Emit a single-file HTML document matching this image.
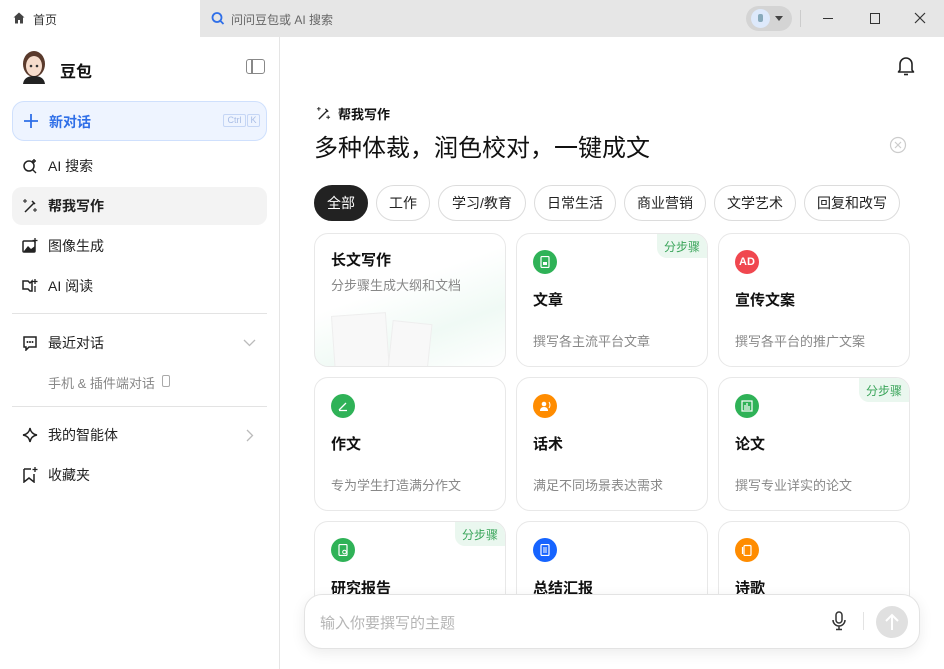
<!DOCTYPE html>
<html><head><meta charset="utf-8">
<style>
*{box-sizing:border-box;margin:0;padding:0}
body{width:944px;height:669px;overflow:hidden;background:#fff;font-family:"Liberation Sans","Noto Sans CJK SC",sans-serif;color:#222;position:relative}
.a{position:absolute}
.tabbar{left:0;top:0;width:944px;height:37px;background:#e6e6e6}
.side{left:0;top:37px;width:280px;height:632px;border-right:1px solid #e5e5e5;background:#fff}
.item{position:absolute;left:12px;width:255px;height:38px;border-radius:10px;font-size:14px;display:flex;align-items:center;padding-left:36px;color:#222}
.item svg{position:absolute;left:10px;top:11px}
.chip{position:absolute;top:185px;height:36px;border:1px solid #dcdcdc;border-radius:18px;font-size:14px;display:flex;align-items:center;justify-content:center;color:#222}
.card{position:absolute;width:192px;height:134px;border:1px solid #e8e8e8;border-radius:14px;background:#fff;overflow:hidden}
.card .ic{position:absolute;left:16px;top:16px;width:24px;height:24px;border-radius:50%}
.card .ic svg{position:absolute;left:6px;top:6px}
.card .t{position:absolute;left:16px;top:55px;font-size:15px;font-weight:bold;color:#111}
.card .d{position:absolute;left:16px;top:97px;font-size:13px;color:#888}
.badge{position:absolute;right:0;top:0;width:50px;height:24px;background:#eaf7ef;color:#3aa55a;font-size:12px;border-bottom-left-radius:10px;display:flex;align-items:center;justify-content:center}
</style></head><body>
<div class="a tabbar"></div>
<div class="a" style="left:0;top:0;width:200px;height:37px;background:#fff"></div>
<svg class="a" style="left:13px;top:12px" width="12" height="12" viewBox="0 0 12 12"><path d="M6 0.5L0.5 5.5H2V11.5H5V8H7V11.5H10V5.5H11.5Z" fill="#444"/></svg>
<div class="a" style="left:33px;top:11px;font-size:12px;color:#333">首页</div>
<svg class="a" style="left:211px;top:11px" width="14" height="14" viewBox="0 0 14 14"><circle cx="6" cy="6.5" r="4.5" fill="none" stroke="#2f6fe8" stroke-width="1.8"/><path d="M9.5 10L12.5 13" stroke="#2f6fe8" stroke-width="1.8"/></svg>
<div class="a" style="left:231px;top:11px;font-size:12px;color:#666">问问豆包或 AI 搜索</div>
<div class="a" style="left:746px;top:6px;width:46px;height:25px;border-radius:13px;background:#d4d4d4"></div>
<div class="a" style="left:751px;top:9px;width:19px;height:19px;border-radius:50%;background:#dde9fb"></div>
<div class="a" style="left:758px;top:14px;width:5px;height:8px;border-radius:2px;background:#8ab"></div>
<div class="a" style="left:775px;top:16px;width:0;height:0;border-left:4px solid transparent;border-right:4px solid transparent;border-top:5px solid #444"></div>
<div class="a" style="left:800px;top:10px;width:1px;height:17px;background:#ccc"></div>
<div class="a" style="left:823px;top:18px;width:10px;height:1px;background:#333"></div>
<div class="a" style="left:870px;top:13px;width:10px;height:11px;border:1.2px solid #333"></div>
<svg class="a" style="left:914px;top:12px" width="12" height="12"><path d="M1 1L11 11M11 1L1 11" stroke="#333" stroke-width="1.2"/></svg>

<div class="a side"></div>
<svg class="a" style="left:20px;top:50px" width="28" height="34" viewBox="0 0 28 34"><ellipse cx="14" cy="14" rx="11" ry="13" fill="#5a3a2c"/><ellipse cx="14" cy="16" rx="8" ry="10" fill="#f6dccc"/><path d="M3 34Q4 26 14 26Q24 26 25 34Z" fill="#222"/><circle cx="11" cy="16" r="1.3" fill="#333"/><circle cx="17" cy="16" r="1.3" fill="#333"/></svg>
<div class="a" style="left:60px;top:58px;font-size:16px;font-weight:bold;color:#111">豆包</div>
<div class="a" style="left:246px;top:59px;width:19px;height:15px;border:1.5px solid #888;border-radius:3px"></div>
<div class="a" style="left:251px;top:60px;width:1.5px;height:13px;background:#888"></div>

<div class="a" style="left:12px;top:101px;width:255px;height:40px;border-radius:12px;background:#eef4ff;border:1px solid #cfe0fd"></div>
<svg class="a" style="left:24px;top:114px" width="14" height="14"><path d="M7 0V14M0 7H14" stroke="#2f6fe8" stroke-width="1.8"/></svg>
<div class="a" style="left:49px;top:112px;font-size:14px;font-weight:bold;color:#2f6fe8">新对话</div>
<div class="a" style="left:223px;top:114px;width:23px;height:13px;border:1px solid #c5d6f5;border-radius:2px;font-size:9px;color:#a9bde6;text-align:center;line-height:11px">Ctrl</div>
<div class="a" style="left:247px;top:114px;width:13px;height:13px;border:1px solid #c5d6f5;border-radius:2px;font-size:9px;color:#a9bde6;text-align:center;line-height:11px">K</div>

<div class="item" style="top:147px"><svg width="16" height="16" viewBox="0 0 16 16"><circle cx="7" cy="8" r="5" fill="none" stroke="#222" stroke-width="1.5"/><path d="M10.5 11.5L14 15M12 1V5M10 3H14" stroke="#222" stroke-width="1.4"/></svg>AI 搜索</div>
<div class="item" style="top:187px;background:#f3f3f3;font-weight:bold"><svg width="16" height="16" viewBox="0 0 16 16"><path d="M3 14L12 5M10 3L13 6" stroke="#222" stroke-width="1.5"/><path d="M3 1V5M1 3H5M13 10V14M11 12H15" stroke="#222" stroke-width="1"/></svg>帮我写作</div>
<div class="item" style="top:227px"><svg width="16" height="16" viewBox="0 0 16 16"><rect x="1" y="3" width="12" height="11" rx="1" fill="none" stroke="#222" stroke-width="1.5"/><path d="M2 13L6 8L9 11L13 8V14H2Z" fill="#222"/><path d="M13 0V5M10.5 2.5H15.5" stroke="#222" stroke-width="1.3"/></svg>图像生成</div>
<div class="item" style="top:267px"><svg width="16" height="16" viewBox="0 0 16 16"><path d="M1 3H6L8 5L10 3V13H8L6 11H1Z" fill="none" stroke="#222" stroke-width="1.5"/><path d="M13 1V6M10.5 3.5H15.5M13 8V14" stroke="#222" stroke-width="1.3"/></svg>AI 阅读</div>
<div class="a" style="left:12px;top:313px;width:255px;height:1px;background:#e3e3e3"></div>
<div class="item" style="top:324px"><svg width="16" height="16" viewBox="0 0 16 16"><path d="M2 2H14V12H7L4 15V12H2Z" fill="none" stroke="#222" stroke-width="1.5"/><circle cx="5.5" cy="7" r="1" fill="#222"/><circle cx="8" cy="7" r="1" fill="#222"/><circle cx="10.5" cy="7" r="1" fill="#222"/></svg>最近对话</div>
<svg class="a" style="left:243px;top:339px" width="13" height="8"><path d="M1 1L6.5 6.5L12 1" stroke="#bbb" stroke-width="1.3" fill="none"/></svg>
<div class="a" style="left:48px;top:373px;font-size:13px;color:#888">手机 &amp; 插件端对话</div>
<div class="a" style="left:162px;top:375px;width:8px;height:12px;border:1.2px solid #aaa;border-radius:2px"></div>
<div class="a" style="left:12px;top:406px;width:255px;height:1px;background:#e3e3e3"></div>
<div class="item" style="top:416px"><svg width="16" height="16" viewBox="0 0 16 16"><path d="M8 1Q9 7 15 8Q9 9 8 15Q7 9 1 8Q7 7 8 1Z" fill="none" stroke="#222" stroke-width="1.4"/></svg>我的智能体</div>
<svg class="a" style="left:246px;top:429px" width="8" height="13"><path d="M1 1L6.5 6.5L1 12" stroke="#bbb" stroke-width="1.3" fill="none"/></svg>
<div class="item" style="top:456px"><svg width="16" height="16" viewBox="0 0 16 16"><path d="M2 2H9M12 7V15L7 11L2 15V2" fill="none" stroke="#222" stroke-width="1.5"/><path d="M13 0V5M10.5 2.5H15.5" stroke="#222" stroke-width="1.3"/></svg>收藏夹</div>

<svg class="a" style="left:896px;top:55px" width="20" height="22" viewBox="0 0 20 22"><path d="M4 15V9A6 6 0 0 1 16 9V15L17.5 17H2.5Z" fill="none" stroke="#222" stroke-width="1.6" stroke-linejoin="round"/><path d="M8 19.5H12" stroke="#222" stroke-width="1.6"/></svg>

<svg class="a" style="left:316px;top:106px" width="15" height="15" viewBox="0 0 16 16"><path d="M3 14L12 5M10 3L13 6" stroke="#222" stroke-width="1.5"/><path d="M3 1V5M1 3H5M13 10V14M11 12H15" stroke="#222" stroke-width="1"/></svg>
<div class="a" style="left:338px;top:104px;font-size:13px;font-weight:bold;color:#111">帮我写作</div>
<div class="a" style="left:314px;top:128px;font-size:24px;color:#111">多种体裁，润色校对，一键成文</div>
<svg class="a" style="left:889px;top:136px" width="18" height="18"><circle cx="9" cy="9" r="7.5" fill="none" stroke="#ccc" stroke-width="1.2"/><path d="M6 6L12 12M12 6L6 12" stroke="#ccc" stroke-width="1.2"/></svg>

<div class="chip" style="left:314px;width:54px;background:#222;border-color:#222;color:#fff">全部</div>
<div class="chip" style="left:376px;width:54px">工作</div>
<div class="chip" style="left:438px;width:88px">学习/教育</div>
<div class="chip" style="left:534px;width:82px">日常生活</div>
<div class="chip" style="left:624px;width:82px">商业营销</div>
<div class="chip" style="left:714px;width:82px">文学艺术</div>
<div class="chip" style="left:804px;width:96px">回复和改写</div>

<div class="card" style="left:314px;top:233px;background:linear-gradient(160deg,#fff 40%,#f0faf5 70%,#fff)">
<div class="t" style="top:15px">长文写作</div><div class="d" style="top:41px">分步骤生成大纲和文档</div>
<div class="a" style="left:18px;top:80px;width:55px;height:60px;background:#f8f8f8;border:1px solid #eee;transform:rotate(-4deg)"></div>
<div class="a" style="left:75px;top:88px;width:40px;height:50px;background:#f8f8f8;border:1px solid #eee;transform:rotate(6deg)"></div>
</div>
<div class="card" style="left:516px;top:233px"><div class="badge">分步骤</div><div class="ic" style="background:#2fb257"><svg width="12" height="12"><rect x="2" y="0.5" width="8" height="11" rx="1" fill="none" stroke="#fff" stroke-width="1.2"/><rect x="4" y="6" width="4" height="3" fill="#fff"/></svg></div><div class="t">文章</div><div class="d">撰写各主流平台文章</div></div>
<div class="card" style="left:718px;top:233px"><div class="ic" style="background:#f0474f;color:#fff;font-size:11px;font-weight:bold;text-align:center;line-height:24px">AD</div><div class="t">宣传文案</div><div class="d">撰写各平台的推广文案</div></div>

<div class="card" style="left:314px;top:377px"><div class="ic" style="background:#2fb257"><svg width="12" height="12"><path d="M2 10L9 3M2 10.5H10" stroke="#fff" stroke-width="1.3"/></svg></div><div class="t">作文</div><div class="d">专为学生打造满分作文</div></div>
<div class="card" style="left:516px;top:377px"><div class="ic" style="background:#ff8c00"><svg width="12" height="12"><circle cx="5" cy="4" r="2.3" fill="#fff"/><path d="M1 11Q1 7 5 7Q9 7 9 11Z" fill="#fff"/><path d="M10 2Q12 5 10 8" stroke="#fff" fill="none"/></svg></div><div class="t">话术</div><div class="d">满足不同场景表达需求</div></div>
<div class="card" style="left:718px;top:377px"><div class="badge">分步骤</div><div class="ic" style="background:#2fb257"><svg width="12" height="12"><rect x="1" y="1" width="10" height="10" fill="none" stroke="#fff" stroke-width="1.2"/><path d="M4 10V5M6 10V3M8 10V6" stroke="#fff" stroke-width="1.2"/></svg></div><div class="t">论文</div><div class="d">撰写专业详实的论文</div></div>

<div class="card" style="left:314px;top:521px;height:100px"><div class="badge">分步骤</div><div class="ic" style="background:#2fb257"><svg width="12" height="12"><rect x="2" y="0.5" width="8" height="11" rx="1" fill="none" stroke="#fff" stroke-width="1.2"/><circle cx="7.5" cy="8" r="1.8" fill="none" stroke="#fff"/></svg></div><div class="t">研究报告</div></div>
<div class="card" style="left:516px;top:521px;height:100px"><div class="ic" style="background:#1664ff"><svg width="12" height="12"><rect x="2" y="0.5" width="8" height="11" rx="1" fill="none" stroke="#fff" stroke-width="1.2"/><path d="M4 4H8M4 6H8M4 8H8" stroke="#fff"/></svg></div><div class="t">总结汇报</div></div>
<div class="card" style="left:718px;top:521px;height:100px"><div class="ic" style="background:#ff8c00"><svg width="12" height="12"><rect x="3" y="1.5" width="7" height="10" rx="1" fill="none" stroke="#fff" stroke-width="1.2"/><path d="M1.5 3V10" stroke="#fff" stroke-width="1.2"/></svg></div><div class="t">诗歌</div></div>

<div class="a" style="left:304px;top:594px;width:616px;height:55px;border:1px solid #e3e3e3;border-radius:18px;background:#fff;box-shadow:0 4px 14px rgba(0,0,0,0.08)"></div>
<div class="a" style="left:320px;top:612px;font-size:15px;color:#b5b5b5">输入你要撰写的主题</div>
<svg class="a" style="left:831px;top:611px" width="16" height="20" viewBox="0 0 16 20"><rect x="5" y="1" width="6" height="11" rx="3" fill="none" stroke="#333" stroke-width="1.5"/><path d="M2 9A6 6 0 0 0 14 9M8 15V18M5 18.5H11" fill="none" stroke="#333" stroke-width="1.5"/></svg>
<div class="a" style="left:863px;top:612px;width:1px;height:18px;background:#e3e3e3"></div>
<div class="a" style="left:876px;top:606px;width:32px;height:32px;border-radius:50%;background:#e0e0e0"></div>
<svg class="a" style="left:884px;top:613px" width="16" height="18"><path d="M8 17V2M2 8L8 2L14 8" stroke="#fff" stroke-width="2" fill="none"/></svg>
</body></html>
